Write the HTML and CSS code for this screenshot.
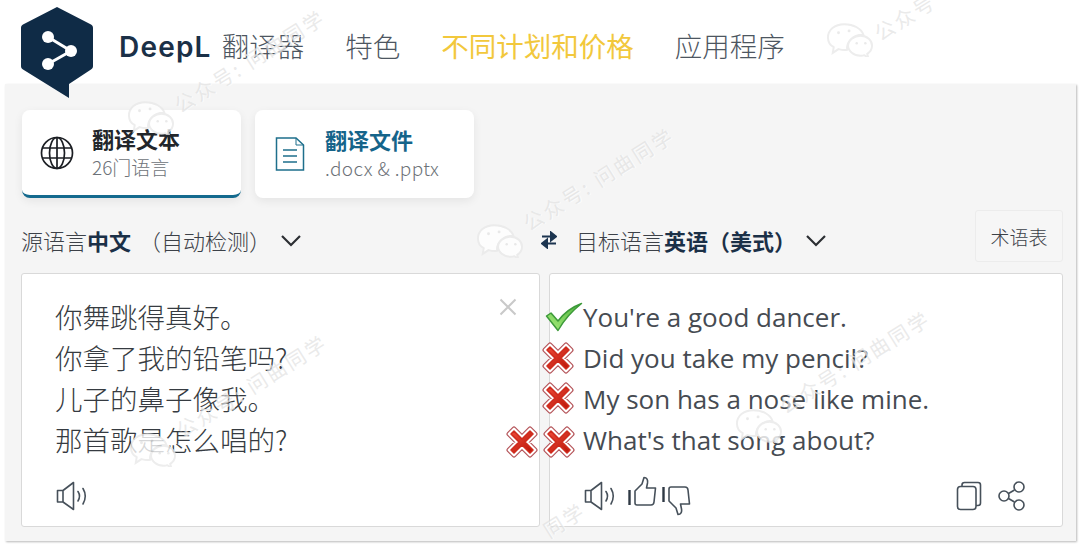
FILE: index.html
```html
<!DOCTYPE html>
<html lang="zh-CN">
<head>
    <meta charset="UTF-8">
    <meta name="viewport" content="width=device-width, initial-scale=1.0">
    <title>DeepL 翻译器</title>
    <link rel="stylesheet" href="styles.css">
</head>
<body>
    <svg class="defs" width="0" height="0">
        <defs>
            <linearGradient id="redFill" x1="0" y1="0" x2="1" y2="1">
                <stop offset="0" stop-color="#ee4a38"/>
                <stop offset="1" stop-color="#b81408"/>
            </linearGradient>
            <linearGradient id="greenFill" x1="0" y1="1" x2="1" y2="0">
                <stop offset="0" stop-color="#a8ec7c"/>
                <stop offset="1" stop-color="#4fb53c"/>
            </linearGradient>
            <symbol id="cross" viewBox="0 0 32 32">
                <path d="M8 3 16 11 24 3 29 8 21 16 29 24 24 29 16 21 8 29 3 24 11 16 3 8Z" fill="#fff" stroke="#b5555a" stroke-width="5" stroke-linejoin="round"/>
                <path d="M8 3 16 11 24 3 29 8 21 16 29 24 24 29 16 21 8 29 3 24 11 16 3 8Z" fill="#fff" stroke="#fff" stroke-width="2.6" stroke-linejoin="round"/>
                <path d="M8 5 16 13 24 5 27 8 19 16 27 24 24 27 16 19 8 27 5 24 13 16 5 8Z" fill="url(#redFill)" stroke="#cf2a1c" stroke-width="1.6" stroke-linejoin="round"/>
            </symbol>
            <symbol id="speaker" viewBox="0 0 32 30">
                <path d="M1.500 9.500H7V21H1.500ZM7 9.500 17.500 1.500V28.500L7 21" fill="none" stroke="#46505a" stroke-width="1.600" stroke-linejoin="round"/>
                <path d="M22 10.500Q25 15 22 20M27 7.500Q31.500 15 27 23" fill="none" stroke="#46505a" stroke-width="1.600" stroke-linecap="round"/>
            </symbol>
            <symbol id="bubbles" viewBox="0 0 48 36">
                <path d="M18 2C8 2 1 8 1 16c0 4 2 8 6 10l-1 6 6-4c2 .5 4 1 6 1 1 0 2 0 3-.2C20 21 27 13 37 13h1C36 7 28 2 18 2Z" fill="#fff" stroke="#e9e9e9" stroke-width="2"/>
                <path d="M35 14c-7 0-13 5-13 10.500S28 35 35 35c1.500 0 3-.2 4-.6l4 2.600-1-4c3-2 5-5 5-8.500C47 19 42 14 35 14Z" fill="#fff" stroke="#e9e9e9" stroke-width="2"/>
                <circle cx="12" cy="11" r="1.500" fill="#e6e6e6"/>
                <circle cx="23" cy="9" r="1.500" fill="#e6e6e6"/>
                <circle cx="31" cy="22" r="1.300" fill="#e6e6e6"/>
                <circle cx="40" cy="22" r="1.300" fill="#e6e6e6"/>
            </symbol>
        </defs>
    </svg>

    <header class="top-bar">
        <svg class="logo" viewBox="0 0 72 91" width="72" height="91">
            <path d="M36 0 70 17.500C71.500 18.500 72 19.500 72 21V59C72 60.500 71.500 61.500 70 62.500L48 77V91L2 62.500C.5 61.500 0 60.500 0 59V21C0 19.500 .5 18.500 2 17.500Z" fill="#0f2b46"/>
            <path d="M27 30 50 44 27 57" fill="none" stroke="#fff" stroke-width="3"/>
            <circle cx="27" cy="30" r="6" fill="#fff"/>
            <circle cx="50" cy="44" r="6" fill="#fff"/>
            <circle cx="27" cy="57" r="6" fill="#fff"/>
        </svg>
        <span class="brand">DeepL</span>
        <nav class="nav">
            <a href="#">翻译器</a>
            <a href="#">特色</a>
            <a class="nav-plan" href="#">不同计划和价格</a>
            <a href="#">应用程序</a>
        </nav>
    </header>

    <main class="translator">
        <div class="tabs">
            <div class="tab tab-active">
                <svg class="tab-icon" viewBox="0 0 34 34" width="34" height="34">
                    <g fill="none" stroke="#1b1e23" stroke-width="1.700">
                        <circle cx="17" cy="17" r="15.500"/>
                        <ellipse cx="17" cy="17" rx="7.500" ry="15.500"/>
                        <path d="M2.500 12H31.500M2.500 22H31.500M17 1.500V32.500"/>
                    </g>
                </svg>
                <div>
                    <div class="tab-title">翻译文本</div>
                    <div class="tab-sub">26门语言</div>
                </div>
            </div>
            <div class="tab tab-file">
                <svg class="tab-icon" viewBox="0 0 30 34" width="30" height="34">
                    <g fill="none" stroke="#1e6f8c" stroke-width="1.500">
                        <path d="M1.500 1H21L28.500 8V33H1.500Z"/>
                        <path d="M21 1V8H28.500" stroke-width="1"/>
                        <path d="M8 13H22M8 19H22M8 25H22" stroke-width="1.300"/>
                    </g>
                </svg>
                <div>
                    <div class="tab-title tab-title-blue">翻译文件</div>
                    <div class="tab-sub tab-sub-file">.docx &amp; .pptx</div>
                </div>
            </div>
        </div>

        <div class="columns">
            <section class="column">
                <div class="lang-row">
                    <span class="lang">源语言<b>中文</b><span class="lang-auto">（自动检测）</span></span>
                    <svg class="chevron" viewBox="0 0 22 13" width="22" height="13"><path d="M2 2 11 11 20 2" fill="none" stroke="#2c2f33" stroke-width="2.200"/></svg>
                </div>
                <div class="panel">
                    <div class="text-block cn">
                        <p>你舞跳得真好。</p>
                        <p>你拿了我的铅笔吗?</p>
                        <p>儿子的鼻子像我。</p>
                        <p>那首歌是怎么唱的?</p>
                    </div>
                    <div class="panel-tools">
                        <svg class="tool" width="32" height="30"><use href="#speaker"/></svg>
                    </div>
                    <svg class="clear" viewBox="0 0 18 18" width="18" height="18"><path d="M1.500 1.500 16.500 16.500M16.500 1.500 1.500 16.500" stroke="#c9c9c9" stroke-width="2"/></svg>
                </div>
            </section>

            <section class="column">
                <div class="lang-row lang-row-target">
                    <svg class="swap" viewBox="0 0 16 18" width="16" height="18">
                        <path d="M1 5.500H12M15 5.500 10 1.500V9.500ZM15 12.500H4M1 12.500 6 8.500V16.500Z" fill="#1c3550" stroke="#1c3550" stroke-width="2"/>
                    </svg>
                    <span class="lang">目标语言<b>英语（美式）</b></span>
                    <svg class="chevron" viewBox="0 0 22 13" width="22" height="13"><path d="M2 2 11 11 20 2" fill="none" stroke="#2c2f33" stroke-width="2.200"/></svg>
                    <button class="glossary">术语表</button>
                </div>
                <div class="panel">
                    <div class="text-block en">
                        <p>You're a good dancer.</p>
                        <p>Did you take my pencil?</p>
                        <p>My son has a nose like mine.</p>
                        <p>What's that song about?</p>
                    </div>
                    <div class="panel-tools panel-tools-target">
                        <svg class="tool" width="32" height="30"><use href="#speaker"/></svg>
                        <svg class="thumb" viewBox="0 0 30 32" width="30" height="32">
                            <path d="M1.500 14V29" stroke="#2f3944" stroke-width="2.400"/>
                            <path d="M7 15 14 8 16 1.500C19 1.500 20 4 19.500 7L18.500 12H27.500L26 26C25.800 28 25 29 23 29H9C7.500 29 7 28 7 27Z" fill="none" stroke="#46505a" stroke-width="1.600" stroke-linejoin="round"/>
                        </svg>
                        <svg class="thumb thumb-down" viewBox="0 0 30 32" width="30" height="32">
                            <path d="M1.500 3V18" stroke="#2f3944" stroke-width="2.400"/>
                            <path d="M7 17 14 24 16 30.500C19 30.500 20 28 19.500 25L18.500 20H27.500L26 6C25.800 4 25 3 23 3H9C7.500 3 7 4 7 5Z" fill="none" stroke="#46505a" stroke-width="1.600" stroke-linejoin="round"/>
                        </svg>
                        <svg class="copy" viewBox="0 0 26 30" width="26" height="30">
                            <path d="M6 5V4C6 2.500 7 1.500 8.500 1.500H22C23.500 1.500 24.500 2.500 24.500 4V22C24.500 23.500 23.500 24.500 22 24.500H20" fill="none" stroke="#46505a" stroke-width="1.600"/>
                            <rect x="1.500" y="5.500" width="18.500" height="23" rx="3" fill="#fff" stroke="#46505a" stroke-width="1.600"/>
                        </svg>
                        <svg class="share" viewBox="0 0 28 30" width="28" height="30">
                            <g fill="none" stroke="#46505a" stroke-width="1.600">
                                <circle cx="21" cy="6" r="5"/>
                                <circle cx="6" cy="15" r="5"/>
                                <circle cx="21" cy="24" r="5"/>
                                <path d="M10.500 12.500 16.500 9M10.500 17.500 16.500 21"/>
                            </g>
                        </svg>
                    </div>
                </div>
            </section>
        </div>
    </main>

    <!-- hand drawn check marks laid over the screenshot -->
    <svg class="mark mark-check" viewBox="0 0 38 30" width="38" height="30">
        <path d="M1.500 14 6 11 13 19C19 11 27 5 36.500 1.500 27 9 19 18 13 28.500Z" fill="url(#greenFill)" stroke="#3d9a3a" stroke-width="1.500" stroke-linejoin="round"/>
    </svg>
    <svg class="mark mark-x1" width="32" height="32"><use href="#cross"/></svg>
    <svg class="mark mark-x2" width="32" height="32"><use href="#cross"/></svg>
    <svg class="mark mark-x3" width="32" height="32"><use href="#cross"/></svg>
    <svg class="mark mark-x4" width="32" height="32"><use href="#cross"/></svg>

    <!-- watermarks -->
    <div class="watermarks">
        <svg class="wm-icon wm-icon-1" width="46" height="35"><use href="#bubbles"/></svg>
        <span class="wm-text wm-text-1">公众号: 问曲同学</span>
        <svg class="wm-icon wm-icon-2" width="46" height="35"><use href="#bubbles"/></svg>
        <span class="wm-text wm-text-2">公众号</span>
        <svg class="wm-icon wm-icon-3" width="46" height="35"><use href="#bubbles"/></svg>
        <span class="wm-text wm-text-3">公众号: 问曲同学</span>
        <svg class="wm-icon wm-icon-4" width="46" height="35"><use href="#bubbles"/></svg>
        <span class="wm-text wm-text-4">公众号: 问曲同学</span>
        <svg class="wm-icon wm-icon-5" width="46" height="35"><use href="#bubbles"/></svg>
        <span class="wm-text wm-text-5">公众号: 问曲同学</span>
        <span class="wm-text wm-text-6">同学</span>
    </div>
</body>
</html>
```

FILE: styles.css
```css
* {
    margin: 0;
    padding: 0;
    box-sizing: border-box;
}

html, body {
    height: 545px;
    overflow: hidden;
}

body {
    position: relative;
    width: 1080px;
    background-color: #fff;
    font-family: "Noto Sans CJK SC", sans-serif;
    color: #3c4148;
}

.defs {
    position: absolute;
}

.top-bar {
    display: flex;
    align-items: flex-start;
    height: 84px;
    padding: 7px 0 0 21px;
}

.logo {
    flex: none;
    position: relative;
    z-index: 2;
}

.brand {
    margin: 21px 0 0 26px;
    font-family: "Inter", sans-serif;
    font-size: 28px;
    font-weight: 600;
    letter-spacing: 1.2px;
    line-height: 38px;
    color: #1b3047;
}

.nav {
    display: flex;
    gap: 41px;
    margin: 18px 0 0 10px;
}

.nav a {
    font-size: 27.500px;
    font-weight: 300;
    line-height: 40px;
    color: #4d5661;
    text-decoration: none;
}

.nav a.nav-plan {
    color: #f2c83c;
    font-weight: 400;
}

.translator {
    height: 457px;
    margin: 0 4px 0 5px;
    padding: 26px 13px 0 16px;
    background-color: #f5f5f5;
    box-shadow: 1px 1px 2px #b9b9b9;
}

.tabs {
    display: flex;
    gap: 14px;
    margin-left: 1px;
}

.tab {
    display: flex;
    align-items: center;
    gap: 18px;
    width: 219px;
    height: 88px;
    padding: 0 14px 0 18px;
    background-color: #fff;
    border-radius: 8px;
    box-shadow: 0 3px 10px rgba(0, 0, 0, 0.07);
}

.tab-file {
    padding-left: 20px;
    gap: 20px;
}

.tab-active {
    border-bottom: 3px solid #146a8e;
}

.tab-title {
    margin-top: -2px;
    font-size: 22px;
    font-weight: 700;
    line-height: 29px;
    color: #22262b;
}

.tab-title-blue {
    color: #15648a;
}

.tab-sub {
    font-size: 19px;
    font-weight: 300;
    line-height: 27px;
    color: #6d7278;
}

.tab-sub-file {
    letter-spacing: 0.4px;
}

.columns {
    display: grid;
    grid-template-columns: 519px 514px;
    gap: 9px;
}

.lang-row {
    display: flex;
    align-items: center;
    height: 75px;
    padding-top: 9px;
    gap: 9px;
}

.lang {
    font-size: 22px;
    font-weight: 300;
    color: #3c4148;
    white-space: nowrap;
}

.lang b {
    font-weight: 700;
    color: #1b3047;
}

.lang-auto {
    margin-left: 8px;
}

.lang-row-target {
    margin-left: -8px;
}

.swap {
    margin-right: 10px;
}

.glossary {
    margin-left: auto;
    width: 88px;
    height: 52px;
    margin-bottom: 8px;
    background-color: #f6f6f6;
    border: 1px solid #ececec;
    border-radius: 3px;
    font-family: inherit;
    font-size: 19px;
    font-weight: 300;
    color: #3c4148;
}

.panel {
    position: relative;
    height: 254px;
    background-color: #fff;
    border: 1px solid #d9d9d9;
    border-radius: 3px;
}

.text-block {
    padding: 22px 0 0 33px;
    line-height: 41px;
    color: #363b41;
}

.cn {
    font-size: 27.500px;
    font-weight: 300;
}

.en {
    padding-top: 23px;
    font-family: "Open Sans", sans-serif;
    font-size: 26px;
    color: #464b52;
}

.panel-tools {
    display: flex;
    align-items: center;
    margin: 18px 0 0 34px;
    height: 36px;
}

.en + .panel-tools {
    margin-top: 17px;
}

.panel-tools-target {
    gap: 13px;
}

.thumb {
    margin-left: -1px;
    margin-top: -8px;
}

.thumb-down {
    margin-left: -9px;
    margin-top: 8px;
}

.copy {
    margin-left: auto;
}

.share {
    margin: 0 36px 0 3px;
}

.clear {
    position: absolute;
    top: 24px;
    right: 22px;
}

.mark {
    position: absolute;
    z-index: 3;
}

.mark-check {
    left: 545px;
    top: 302px;
}

.mark-x1 {
    left: 542px;
    top: 342px;
}

.mark-x2 {
    left: 542px;
    top: 382px;
}

.mark-x3 {
    left: 543px;
    top: 426px;
}

.mark-x4 {
    left: 506px;
    top: 426px;
}

.watermarks {
    position: absolute;
    inset: 0;
    z-index: 4;
    overflow: hidden;
    pointer-events: none;
}

.wm-icon {
    position: absolute;
    opacity: 0.8;
}

.wm-text {
    position: absolute;
    font-size: 20px;
    font-weight: 400;
    line-height: 20px;
    letter-spacing: 2.600px;
    white-space: nowrap;
    color: rgba(222, 222, 222, 0.65);
    text-shadow: 1px 1px 0 rgba(255, 255, 255, 0.6);
    transform: rotate(-32deg);
    transform-origin: 0 50%;
}

.wm-icon-1 { left: 128px; top: 100px; }
.wm-text-1 { left: 176px; top: 97px; }
.wm-icon-2 { left: 827px; top: 22px; }
.wm-text-2 { left: 876px; top: 25px; }
.wm-icon-3 { left: 477px; top: 223px; }
.wm-text-3 { left: 525px; top: 215px; }
.wm-icon-4 { left: 736px; top: 408px; }
.wm-text-4 { left: 781px; top: 398px; }
.wm-icon-5 { left: 130px; top: 432px; }
.wm-text-5 { left: 178px; top: 422px; }
.wm-text-6 { left: 545px; top: 522px; }
```
